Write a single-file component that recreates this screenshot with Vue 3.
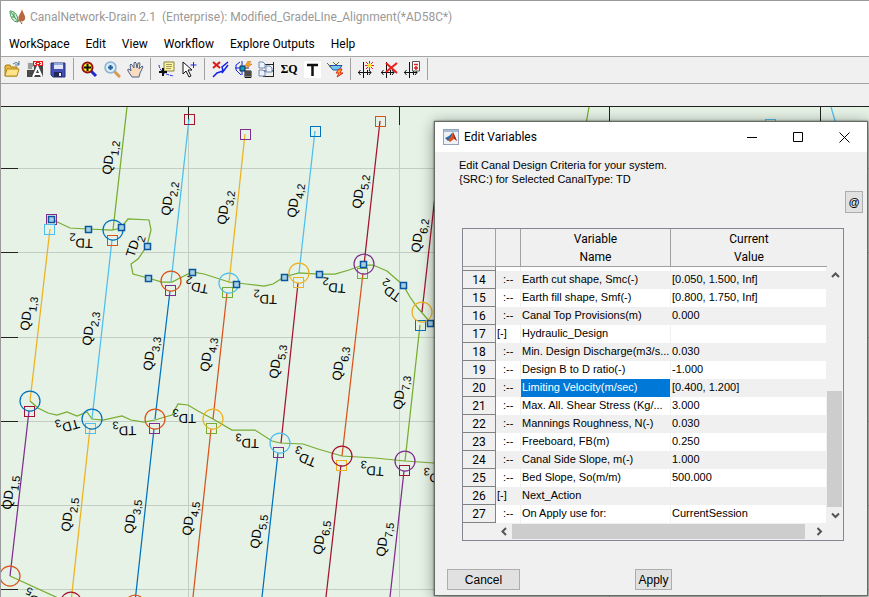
<script setup>
import { ref } from 'vue'

const menus = ['WorkSpace', 'Edit', 'View', 'Workflow', 'Explore Outputs', 'Help']

const toolGroups = [
  ['Open', 'Annotate', 'Save'],
  ['Zoom region', 'Zoom in', 'Pan'],
  ['Data tip', 'Select'],
  ['Delete line', 'Compute node', 'Layout', 'Discharge', 'Text', 'Section'],
  ['New axis point', 'Delete axis point', 'Axis table'],
]

const c = {
  blue: '#0072bd', orange: '#d95319', yellow: '#edb120', purple: '#7e2f8e',
  green: '#77ac30', cyan: '#4dbeee', maroon: '#a2142f',
}

const gridX = [188, 399, 609, 820]
const gridY = [168, 252, 337, 421, 505, 589]

const drains = [
  [127, 107, 113, 230, c.green], [189, 119, 171, 282, c.cyan], [245, 134, 229, 283, c.yellow],
  [315, 131, 299, 273, c.cyan], [380, 121, 364, 265, c.maroon], [435, 196, 422, 312, c.maroon],
  [50, 229, 30, 401, c.yellow], [112, 240, 92, 419, c.cyan], [170, 291, 155, 419, c.blue],
  [227, 293, 213, 419, c.orange], [298, 283, 281, 443, c.maroon], [363, 273, 342, 456, c.orange],
  [420, 325, 405, 461, c.green], [29, 411, 10, 576, c.purple], [90, 428, 71, 602, c.yellow],
  [154, 429, 135, 602, c.blue], [211, 429, 193, 597, c.orange], [278, 453, 262, 597, c.blue],
  [341, 465, 326, 597, c.maroon], [404, 471, 390, 597, c.purple],
  [589, 107, 586, 124, c.green], [831, 107, 836, 124, c.cyan],
]

const canals = [
  '51,219 70,228 88,229 112,230 121,228 128,219 149,220 151,230 147,246 138,259 131,264 133,274 148,278 162,282 172,282 180,278 192,272 204,274 229,282 246,284 264,286 273,284 284,277 299,273 319,274 335,274 349,270 363,265 373,265 387,271 403,285 410,297 417,307 430,322',
  '30,401 38,408 48,413 57,415 67,412 77,416 87,412 92,419 103,420 122,416 131,420 144,422 155,420 165,417 172,415 178,404 188,405 198,411 213,419 232,430 255,430 272,441 280,443 303,444 318,449 342,456 375,458 405,461 434,463',
  '10,576 58,598',
]

const boxes = [
  [189, 119, c.maroon], [51, 219, c.purple], [49, 229, c.cyan], [112, 240, c.orange],
  [245, 134, c.purple], [315, 131, c.blue], [380, 121, c.orange], [170, 290, c.purple],
  [227, 292, c.green], [298, 282, c.yellow], [362, 273, c.green], [420, 325, c.blue],
  [29, 411, c.maroon], [90, 428, c.cyan], [154, 428, c.purple], [211, 428, c.green],
  [278, 452, c.purple], [341, 465, c.yellow], [404, 470, c.maroon], [770, 124, c.cyan],
]

const circles = [
  [113, 230, c.blue], [171, 281, c.orange], [229, 283, c.cyan], [299, 273, c.yellow],
  [364, 264, c.purple], [422, 312, c.yellow], [30, 401, c.blue], [92, 419, c.blue],
  [155, 419, c.orange], [213, 419, c.yellow], [280, 443, c.cyan], [342, 456, c.maroon],
  [405, 461, c.purple], [10, 576, c.orange], [71, 602, c.maroon], [135, 605, c.orange],
]

const nodes = [
  [51, 219], [88, 229], [121, 227], [147, 246], [148, 278], [192, 272], [236, 284],
  [284, 277], [319, 274], [363, 264], [403, 285], [430, 323],
]

const labels = [
  ['QD', '1,2', 111, 175, -83], ['QD', '2,2', 170, 216, -83], ['QD', '3,2', 226, 225, -83],
  ['QD', '4,2', 296, 218, -83], ['QD', '5,2', 361, 209, -83], ['QD', '6,2', 420, 253, -83],
  ['QD', '1,3', 29, 331, -83], ['QD', '2,3', 91, 346, -83], ['QD', '3,3', 152, 371, -83],
  ['QD', '4,3', 209, 372, -83], ['QD', '5,3', 278, 379, -83], ['QD', '6,3', 341, 381, -83],
  ['QD', '7,3', 402, 410, -83], ['QD', '1,5', 11, 510, -83], ['QD', '2,5', 70, 532, -83],
  ['QD', '3,5', 133, 534, -83], ['QD', '4,5', 191, 536, -83], ['QD', '5,5', 259, 549, -83],
  ['QD', '6,5', 322, 555, -83], ['QD', '7,5', 385, 557, -83],
  ['TD', '2', 93, 239, 182], ['TD', '2', 134, 258, -72], ['TD', '2', 209, 285, 190],
  ['TD', '2', 277, 295, 181], ['TD', '2', 346, 284, 184], ['TD', '2', 402, 295, 215],
  ['TD', '3', 78, 419, 164], ['TD', '3', 136, 426, 178], ['TD', '3', 196, 414, 180],
  ['TD', '3', 259, 439, 181], ['TD', '3', 317, 459, 202], ['TD', '3', 384, 467, 183],
  ['TD', '3', 447, 474, 183], ['TD', '5', 47, 601, 205],
]

const rows = [
  [14, ':--', 'Earth cut shape, Smc(-)', '[0.050, 1.500, Inf]'],
  [15, ':--', 'Earth fill shape, Smf(-)', '[0.800, 1.750, Inf]'],
  [16, ':--', 'Canal Top Provisions(m)', '0.000'],
  [17, '[-]', 'Hydraulic_Design', ''],
  [18, ':--', 'Min. Design Discharge(m3/s...', '0.030'],
  [19, ':--', 'Design B to D ratio(-)', '-1.000'],
  [20, ':--', 'Limiting Velocity(m/sec)', '[0.400, 1.200]'],
  [21, ':--', 'Max. All. Shear Stress (Kg/...', '3.000'],
  [22, ':--', 'Mannings Roughness, N(-)', '0.030'],
  [23, ':--', 'Freeboard, FB(m)', '0.250'],
  [24, ':--', 'Canal Side Slope, m(-)', '1.000'],
  [25, ':--', 'Bed Slope, So(m/m)', '500.000'],
  [26, '[-]', 'Next_Action', ''],
  [27, ':--', 'On Apply use for:', 'CurrentSession'],
]
const selected = ref(20)
</script>

<template>
  <div class="app">
    <header class="titlebar">
      <svg class="logo" width="18" height="16" viewBox="0 0 18 16">
        <path d="M1 2C5 2 9 5 9 13C4 13 1 8 1 2Z" fill="#dff0df" stroke="#3d9a55" />
        <path d="M2 3L9 13M5 4V8M3 8H6" stroke="#3d9a55" fill="none" />
        <path d="M13 0C14 4 17 7 16 10C15 13 12 13 10 11C8 7 12 5 13 0Z" fill="#b5683f" />
        <path d="M9 11Q12 12 13 15" stroke="#8c4a2c" fill="none" />
      </svg>
      <span class="app-title">CanalNetwork-Drain 2.1&nbsp; (Enterprise): Modified_GradeLIne_Alignment(*AD58C*)</span>
    </header>

    <nav class="menubar">
      <button v-for="m in menus" :key="m" type="button">{{ m }}</button>
    </nav>

    <div class="toolbar" role="toolbar">
      <div v-for="(group, gi) in toolGroups" :key="gi" class="tool-group">
        <button v-for="t in group" :key="t" type="button" :aria-label="t">
          <svg width="17" height="17" viewBox="0 0 17 17">
            <g v-if="t === 'Open'">
              <path d="M1 15V5L2 4H6L7 6H13V15Z" fill="#e8b93c" stroke="#a97c12" />
              <path d="M1 15L3 8H15L13 15Z" fill="#ffe48a" stroke="#b58a1c" />
              <path d="M9 3Q12 0 15 3M15 0V4H11" fill="none" stroke="#4a7696" />
            </g>
            <g v-else-if="t === 'Annotate'">
              <path d="M0 1H16V16H0Z" fill="#454545" />
              <path d="M0 1H7V9H0Z" fill="#e6e6e6" />
              <path d="M1 3H6M1 5H6M1 7H5M1 11H5M1 14H4" stroke="#555" />
              <path d="M6 0H16V5H6Z" fill="#e01b1b" />
              <path d="M9 1.500H7.500V3.500H9M13 1.500H14.500V3.500H13M10 2.500H12" stroke="#fff" fill="none" />
              <path d="M6 16L10.500 6L15 16M8 13H13" stroke="#fff" stroke-width="2" fill="none" />
            </g>
            <g v-else-if="t === 'Save'">
              <path d="M1 2H15V16H3L1 14Z" fill="#4650b4" stroke="#25307f" />
              <path d="M4 2H13V8H4Z" fill="#dfe6f7" />
              <path d="M4 2H13V4H4Z" fill="#90a8dc" />
              <path d="M4 11H12V16H4Z" fill="#202858" />
              <path d="M9 12H11V15H9Z" fill="#eef" />
            </g>
            <g v-else-if="t === 'Zoom region'">
              <path d="M10 10L15 15" stroke="#1b2bd0" stroke-width="3" />
              <circle cx="6.500" cy="6.500" r="5" fill="#ffee20" stroke="#960d0d" stroke-width="2" />
              <path d="M6.500 3V10M3 6.500H10" stroke="#111" stroke-width="2" />
            </g>
            <g v-else-if="t === 'Zoom in'">
              <path d="M10 10L16 16" stroke="#d79a4c" stroke-width="3" />
              <circle cx="6.500" cy="6.500" r="5.500" fill="#d7ecfa" stroke="#8eb2cf" stroke-width="1.500" />
              <path d="M6.500 4V9M4 6.500H9" stroke="#245d92" stroke-width="2" />
            </g>
            <path
              v-else-if="t === 'Pan'"
              d="M5 16L1 10Q0 8 2 8L4 10L3 4Q4 2 5 4L7 7L7 2Q8 0 9 2L10 7L11 2Q13 1 13 3L12 8L15 5Q17 5 15 8L13 12L12 16Z"
              fill="#fbdcc0" stroke="#4b648c"
            />
            <g v-else-if="t === 'Data tip'">
              <path d="M1 4Q2 13 16 15" fill="none" stroke="#1d25e0" stroke-dasharray="3 1" />
              <path d="M6 1H16V10H6Z" fill="#fbf3a8" stroke="#8a8340" />
              <path d="M8 3.500H14M8 5.500H14M8 7.500H13" stroke="#a39b55" />
              <path d="M5 7V15M1 11H9" stroke="#111" stroke-width="2" />
            </g>
            <g v-else-if="t === 'Select'">
              <path d="M2 1L2 13L5 10L8 16L10 15L7 9H11Z" fill="#fff" stroke="#111" />
              <path d="M12.500 1V7M9.500 4H15.500" stroke="#1d25e0" />
            </g>
            <g v-else-if="t === 'Delete line'">
              <path d="M16 1L10 6L11 10L5 12L1 16M10 12L16 4" stroke="#1422e6" stroke-width="1.500" fill="none" />
              <path d="M1 1L8 7M8 1L1 7" stroke="#dc1a1a" stroke-width="2" />
            </g>
            <g v-else-if="t === 'Compute node'">
              <path d="M5 1L1 4V9L6 14M0 7H14M7 0V14" stroke="#1422e6" fill="none" />
              <path d="M5 5H10V10H5Z" fill="#159ac0" stroke="#072b55" />
              <path d="M13 0L10 5H13L11 8L17 3H14L16 0Z" fill="#f6a52c" stroke="#c26f0c" stroke-width=".5" />
              <path d="M10 10H16V16.500H10Z" fill="#fff" stroke="#111" />
              <path d="M10 12H16M10 14H16M12 10V16M14 10V16" stroke="#111" />
            </g>
            <g v-else-if="t === 'Layout'">
              <path d="M6 3.500H15.500V15.500H5M6 10H15M15.500 1V16" stroke="#222" fill="none" />
              <path d="M1 1H5L7 3V7H1ZM8 5H12L14 7V11H8ZM1 9H5L7 11V15H1Z" fill="#edf4ff" stroke="#7286ad" />
            </g>
            <text v-else-if="t === 'Discharge'" x="8" y="12" text-anchor="middle" class="glyph-sq">ΣQ</text>
            <g v-else-if="t === 'Text'">
              <rect width="17" height="17" fill="#fff" />
              <path d="M3 4H14M8.500 4V15" stroke="#111" stroke-width="2.500" />
            </g>
            <g v-else-if="t === 'Section'">
              <path d="M2 4.500H15L12 9H6Z" fill="#70c7f2" stroke="#2453a6" />
              <path d="M0 2L4 6M6 1L9 4L12 1" stroke="#6b6b25" fill="none" />
              <path d="M12 8L9 12H12L10 16L16 12H13L15 8Z" fill="#ffb225" stroke="#d42613" />
            </g>
            <g v-else>
              <path d="M0 11.500H13M5.500 1V17M9.500 9V14M2.500 9L.5 11.500L2.500 14M11 9L13 11.500L11 14" stroke="#111" fill="none" />
              <g v-if="t === 'New axis point'">
                <path d="M11.500 0V9M7 4.500H16M8 1L15 8M15 1L8 8" stroke="#e71c1c" />
                <circle cx="11.500" cy="4.500" r="2" fill="#ffe52a" />
              </g>
              <path v-else-if="t === 'Delete axis point'" d="M5 2L16 12M16 2L5 11" stroke="#e71c1c" stroke-width="2" />
              <g v-else>
                <path d="M8.500 .5H15.500V10H8.500Z" fill="#fff" stroke="#555" />
                <path d="M10 3.500H14M10 7H14M12 5V9" stroke="#e71c1c" stroke-width="1.500" />
              </g>
            </g>
          </svg>
        </button>
      </div>
    </div>

    <main class="stage">
      <svg class="plot" width="100%" height="100%" role="img" aria-label="Canal network">
        <g transform="translate(-1 -107)">
          <g class="grid">
            <line v-for="x in gridX" :key="'x' + x" :x1="x" y1="107" :x2="x" y2="3000" />
            <line v-for="y in gridY" :key="'y' + y" x1="0" :y1="y" x2="4000" :y2="y" />
          </g>
          <g class="ticks">
            <line v-for="x in gridX" :key="'x' + x" :x1="x" y1="107" :x2="x" y2="125" />
            <line v-for="y in gridY" :key="'y' + y" x1="0" :y1="y" x2="18" :y2="y" />
          </g>
          <polyline v-for="p in canals" :key="p" :points="p" fill="none" :stroke="c.green" stroke-width="1.250" />
          <line v-for="(d, i) in drains" :key="'d' + i" :x1="d[0]" :y1="d[1]" :x2="d[2]" :y2="d[3]" :stroke="d[4]" stroke-width="1.250" />
          <rect v-for="(b, i) in boxes" :key="'b' + i" :x="b[0] - 5" :y="b[1] - 5" width="10" height="10" fill="none" :stroke="b[2]" class="crisp" />
          <circle v-for="(o, i) in circles" :key="'c' + i" :cx="o[0]" :cy="o[1]" r="10" fill="none" :stroke="o[2]" stroke-width="1.250" />
          <rect v-for="(n, i) in nodes" :key="'n' + i" :x="n[0] - 2.5" :y="n[1] - 2.5" width="6" height="6" class="node" />
          <text v-for="(l, i) in labels" :key="'l' + i" :transform="`translate(${l[2]} ${l[3]}) rotate(${l[4]})`">{{ l[0] }}<tspan dy="5" class="sub">{{ l[1] }}</tspan></text>
        </g>
      </svg>
    </main>

    <section class="dialog" role="dialog" aria-label="Edit Variables">
      <header class="dialog-bar">
        <svg width="16" height="16" viewBox="0 0 16 16">
          <rect x=".5" y=".5" width="15" height="15" fill="#eef2f7" stroke="#93a5b8" />
          <path d="M1 1H15V3H1Z" fill="#a9bdd2" />
          <path d="M2 9L6 7L10 3L8 10L5 12Z" fill="#2d6ba8" />
          <path d="M10 3L14 12L11 10L7 13L5 11Q8 9 10 3Z" fill="#d9531e" />
          <path d="M10 3L11 9L14 12Z" fill="#8c2513" />
        </svg>
        <h1>Edit Variables</h1>
        <div class="window-buttons">
          <button type="button" aria-label="Minimize"><svg width="11" height="11"><path d="M0 5.500H10" /></svg></button>
          <button type="button" aria-label="Maximize"><svg width="11" height="11"><path d="M.5 .5H9.500V9.500H.5Z" /></svg></button>
          <button type="button" aria-label="Close"><svg width="11" height="11"><path d="M.5 .5L10.500 10.500M10.500 .5L.5 10.500" /></svg></button>
        </div>
      </header>

      <div class="dialog-body">
        <p class="intro">Edit Canal Design Criteria for your system.<br>{SRC:) for Selected CanalType: TD</p>
        <button type="button" class="btn at">@</button>

        <div class="sheet">
          <table>
            <colgroup><col class="w-num"><col class="w-tree"><col class="w-name"><col></colgroup>
            <thead>
              <tr><th></th><th></th><th>Variable<br>Name</th><th>Current<br>Value</th></tr>
            </thead>
            <tbody>
              <tr class="peek"><th></th><td></td><td></td><td></td></tr>
              <tr v-for="r in rows" :key="r[0]" :class="{ even: r[0] % 2 === 0 }">
                <th scope="row">{{ r[0] }}</th>
                <td :class="{ leaf: r[1] === ':--' }">{{ r[1] }}</td>
                <td :class="{ selected: r[0] === selected }" @click="selected = r[0]">{{ r[2] }}</td>
                <td>{{ r[3] }}</td>
              </tr>
            </tbody>
          </table>
          <div class="vscroll">
            <button type="button" aria-label="Scroll up"><svg width="9" height="7"><path d="M1 5L4.500 1.500L8 5" /></svg></button>
            <div class="vtrack"><div class="vthumb"></div></div>
            <button type="button" aria-label="Scroll down"><svg width="9" height="7"><path d="M1 1.500L4.500 5L8 1.500" /></svg></button>
          </div>
          <div class="hscroll">
            <button type="button" aria-label="Scroll left"><svg width="7" height="9"><path d="M5 1L1.500 4.500L5 8" /></svg></button>
            <div class="hthumb"></div>
            <button type="button" aria-label="Scroll right"><svg width="7" height="9"><path d="M1.500 1L5 4.500L1.500 8" /></svg></button>
          </div>
        </div>

        <footer class="actions">
          <button type="button" class="btn cancel">Cancel</button>
          <button type="button" class="btn apply">Apply</button>
        </footer>
      </div>
    </section>
  </div>
</template>

<style>
body { margin: 0; background: #f0f0f0; }
</style>

<style scoped>
* { box-sizing: border-box; }
button { margin: 0; padding: 0; border: 0; background: none; color: inherit; font: inherit; }
svg { display: block; }
.crisp { shape-rendering: crispEdges; }

.app {
  position: relative;
  display: flex;
  flex-direction: column;
  min-height: 100vh;
  overflow: hidden;
  border-top: 1px solid #9b9b9b;
  border-left: 1px solid #9b9b9b;
  background: #f0f0f0;
  color: #000;
  font: 12px/16px Roboto, "Noto Sans", sans-serif;
}
.titlebar { display: flex; align-items: center; gap: 3px; height: 31px; padding-left: 8px; background: #fff; color: #999; white-space: nowrap; }
.menubar { display: flex; gap: 16px; height: 24px; padding-left: 8px; background: #fff; white-space: nowrap; }
.toolbar { display: flex; align-items: center; height: 28px; padding-bottom: 2px; border-top: 1px solid #a5a5a5; border-bottom: 1px solid #a0a0a0; }
.tool-group { display: flex; height: 22px; margin-right: 4px; padding-right: 3px; border-right: 1px solid #a0a0a0; }
.tool-group button { display: grid; place-items: center; width: 23px; }
.glyph-sq { font: bold 12px "Liberation Serif", serif; }

.stage { position: relative; flex: 1; margin-top: 22px; border-top: 1px solid #222; background: #e6f2e5; }
.plot { position: absolute; inset: 0; }
.plot text { font: 13px "Liberation Sans", Arial, sans-serif; fill: #000; }
.plot .sub { font-size: 11px; }
.grid line { stroke: #c3cec2; shape-rendering: crispEdges; }
.ticks line { stroke: #222; shape-rendering: crispEdges; }
.node { fill: #a6cfe2; stroke: #0b559f; stroke-width: 1.5; }

.dialog {
  position: absolute;
  top: 120px;
  left: 433px;
  width: 434px;
  border: 1px solid #666b66;
  background: #f0f0f0;
  box-shadow: 0 0 2px #0009, 0 2px 14px #0006;
}
.dialog-bar { display: flex; align-items: center; gap: 5px; height: 30px; padding-left: 8px; background: #fff; }
.dialog-bar h1 { margin: 0; font-size: 12px; font-weight: 400; }
.window-buttons { display: flex; margin-left: auto; }
.window-buttons button { display: grid; place-items: center; width: 46px; height: 28px; }
.window-buttons path { fill: none; stroke: #000; }

.dialog-body { display: flex; flex-direction: column; padding: 6px 0 5px; font: 11px/14px "Liberation Sans", Arial, sans-serif; }
.intro { margin: 0 24px; }
.btn { border: 1px solid #adadad; background: #e1e1e1; font: 12px/18px "Liberation Sans", Arial, sans-serif; }
.at { align-self: flex-end; width: 18px; height: 22px; margin: 5px 4px 15px; font-size: 11px; font-weight: 700; }

.sheet {
  display: grid;
  grid-template-columns: 33px 1fr 16px;
  margin: 0 23px 28px 27px;
  border: 1px solid #828790;
}
table { grid-column: 1 / 3; width: 100%; table-layout: fixed; border-collapse: separate; border-spacing: 0; }
.w-num { width: 33px; }
.w-tree { width: 25px; }
.w-name { width: 150px; }
th { padding: 0; font: 12px/18px Roboto, "Noto Sans", sans-serif; }
thead th { height: 38px; border-right: 1px solid #a0a0a0; border-bottom: 1px solid #a0a0a0; }
thead th:last-child { border-right: 0; }
tbody th { height: 18px; padding-top: 1px; border-right: 1px solid #828282; border-bottom: 1px solid #828282; line-height: 16px; }
td { padding: 0 0 2px 1px; border-right: 1px solid #f0f0f0; background: #fff; line-height: 16px; white-space: nowrap; overflow: hidden; }
.even td { background: #f0f0f0; }
.leaf { padding-left: 7px; }
.even td.selected, td.selected { background: #0078d7; color: #fff; }
.peek th, .peek td { height: 4px; padding: 0; line-height: 3px; }

.vscroll { display: flex; flex-direction: column; padding-top: 38px; }
.vscroll button, .hscroll button { display: grid; place-items: center; width: 16px; height: 16px; }
.vscroll path, .hscroll path { fill: none; stroke: #555; stroke-width: 2; }
.vtrack { display: flex; flex: 1; align-items: flex-end; }
.vthumb { width: 15px; height: 52%; background: #cdcdcd; }
.hscroll { grid-column: 2; display: flex; align-items: center; height: 17px; }
.hthumb { flex: 1; height: 15px; margin-right: 6px; background: #cdcdcd; }

.actions { display: flex; justify-content: space-between; padding: 0 195px 0 12px; }
.actions .btn { height: 21px; }
.cancel { width: 73px; }
.apply { width: 37px; }
</style>
